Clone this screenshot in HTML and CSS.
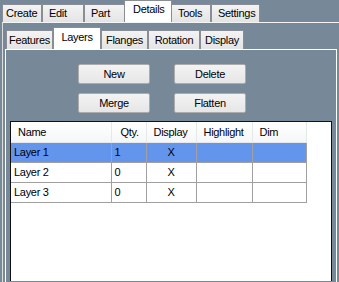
FILE: index.html
```html
<html>

<head>
	<link rel="stylesheet" href="styles.css">
</head>

<body>
	<div class="tabs main-tabs">
		<div class="tab t-create">Create</div>
		<div class="tab t-edit">Edit</div>
		<div class="tab t-part">Part</div>
		<div class="tab t-details active">Details</div>
		<div class="tab t-tools">Tools</div>
		<div class="tab t-settings">Settings</div>
	</div>

	<div class="page">
		<div class="tabs sub-tabs">
			<div class="tab s-features">Features</div>
			<div class="tab s-layers active">Layers</div>
			<div class="tab s-flanges">Flanges</div>
			<div class="tab s-rotation">Rotation</div>
			<div class="tab s-display">Display</div>
		</div>

		<div class="panel">
			<div class="actions">
				<button>New</button>
				<button>Delete</button>
				<button>Merge</button>
				<button>Flatten</button>
			</div>

			<!-- layer list -->
			<div class="list">
				<table>
					<colgroup>
						<col class="c-name">
						<col class="c-qty">
						<col class="c-display">
						<col class="c-highlight">
						<col class="c-dim">
					</colgroup>
					<thead>
						<tr>
							<th>Name</th>
							<th>Qty.</th>
							<th>Display</th>
							<th>Highlight</th>
							<th>Dim</th>
						</tr>
					</thead>
					<tbody>
						<tr class="selected">
							<td>Layer 1</td>
							<td>1</td>
							<td class="mark">X</td>
							<td></td>
							<td></td>
						</tr>
						<tr>
							<td>Layer 2</td>
							<td>0</td>
							<td class="mark">X</td>
							<td></td>
							<td></td>
						</tr>
						<tr>
							<td>Layer 3</td>
							<td>0</td>
							<td class="mark">X</td>
							<td></td>
							<td></td>
						</tr>
					</tbody>
				</table>
			</div>
		</div>
	</div>
</body>

</html>
```

FILE: styles.css
```css
:root {
	--back: #778899;
	--tab-border: #8a8d94;
	--grid: #a0a0a0;
	--select: #6495ed;
}

body {
	margin: 0;
	width: 339px;
	height: 282px;
	overflow: hidden;
	background: var(--back);
	font-family: "Liberation Sans", Arial, sans-serif;
	font-size: 11px;
	letter-spacing: -0.3px;
	color: black;
}

.tabs {
	display: flex;
	align-items: flex-end;
}

.tab {
	box-sizing: border-box;
	border: 1px solid var(--tab-border);
	border-bottom: none;
	background: linear-gradient(#f3f3f3, #e4e4e4);
	white-space: nowrap;
}

.tab.active {
	background: white;
	position: relative;
	z-index: 1;
}

/* top tab strip */
.main-tabs {
	height: 22px;
	padding-left: 2px;
}

.main-tabs .tab {
	height: 18px;
	line-height: 17px;
	padding-left: 6px;
}

.main-tabs .tab.active {
	height: 22px;
	line-height: 17px;
	margin: 0 -2px;
	padding-left: 8px;
}

.t-create { width: 40px; padding-left: 3px !important; }
.t-edit { width: 42px; }
.t-part { width: 42px; }
.t-details { width: 48px; }
.t-tools { width: 41px; padding-left: 7px !important; }
.t-settings { width: 49px; }

.page {
	margin-left: 2px;
	height: 259px;
	border-top: 1px solid #f4f4f4;
	border-left: 1px solid #dcdcdc;
	padding: 4px 0 0 2px;
}

/* inner tab strip */
.sub-tabs {
	height: 22px;
	margin-left: 1px;
}

.sub-tabs .tab {
	height: 19px;
	line-height: 18px;
	text-align: center;
}

.sub-tabs .tab.active {
	height: 22px;
	line-height: 19px;
}

.s-features { width: 47px; }
.s-layers { width: 48px; }
.s-flanges { width: 47px; }
.s-rotation { width: 52px; }
.s-display { width: 44px; }

.panel {
	width: 332px;
	box-sizing: border-box;
	height: 233px;
	border: 1px solid white;
	border-bottom: none;
	padding: 14px 4px 0 4px;
}

.actions {
	display: grid;
	grid-template-columns: 72px 72px;
	column-gap: 24px;
	row-gap: 9px;
	margin-left: 68px;
}

button {
	height: 20px;
	padding: 0;
	font-family: inherit;
	font-size: 11px;
	letter-spacing: -0.3px;
	color: black;
	background: linear-gradient(#f3f3f3, #e6e6e6);
	border: 1px solid #acacac;
	border-radius: 2px;
}

.list {
	margin-top: 8px;
	height: 160px;
	box-sizing: border-box;
	background: white;
	border: 1px solid #111;
	border-bottom: none;
}

table {
	border-collapse: collapse;
	table-layout: fixed;
	width: 295px;
	font-size: 11px;
	letter-spacing: -0.3px;
}

.c-name { width: 100px; }
.c-qty { width: 35px; }
.c-display { width: 50px; }
.c-highlight { width: 56px; }
.c-dim { width: 54px; }

th {
	height: 20px;
	padding: 0 0 0 7px;
	text-align: left;
	font-weight: normal;
	background: linear-gradient(#ffffff, #f5f6f7);
	border-right: 1px solid #e6e8ea;
	border-bottom: 1px solid #e6e8ea;
}

th:nth-child(2) {
	padding-left: 9px;
}

td {
	height: 20px;
	padding: 0 0 0 3px;
	border-right: 1px solid var(--grid);
	border-bottom: 1px solid var(--grid);
	white-space: nowrap;
}

td.mark {
	text-align: center;
	padding: 0;
}

tr.selected td {
	background: var(--select);
}
```
